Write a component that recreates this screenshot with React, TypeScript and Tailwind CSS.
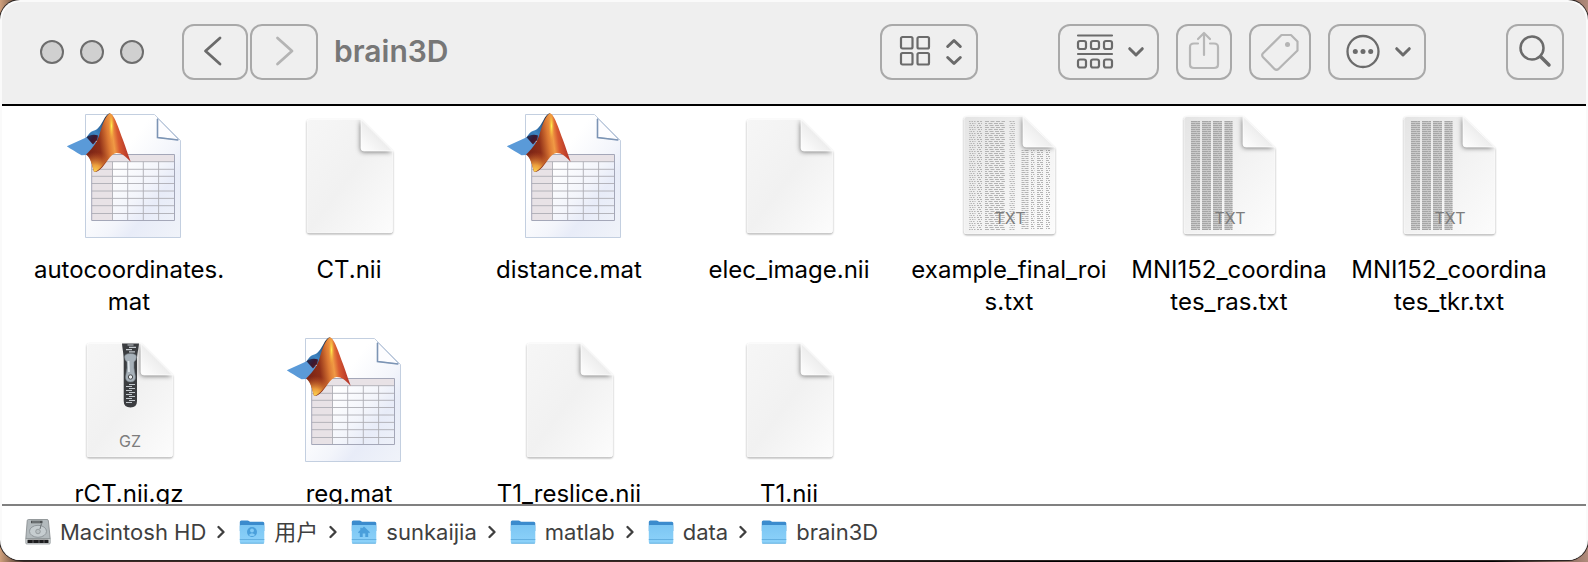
import React, { useId } from "react";

type FileKind = "mat" | "blank" | "txtWide" | "txtNarrow" | "gz";

const files: { label: string; kind: FileKind }[] = [
  { label: "autocoordinates.\nmat", kind: "mat" },
  { label: "CT.nii", kind: "blank" },
  { label: "distance.mat", kind: "mat" },
  { label: "elec_image.nii", kind: "blank" },
  { label: "example_final_roi\ns.txt", kind: "txtWide" },
  { label: "MNI152_coordina\ntes_ras.txt", kind: "txtNarrow" },
  { label: "MNI152_coordina\ntes_tkr.txt", kind: "txtNarrow" },
  { label: "rCT.nii.gz", kind: "gz" },
  { label: "reg.mat", kind: "mat" },
  { label: "T1_reslice.nii", kind: "blank" },
  { label: "T1.nii", kind: "blank" },
];

function MatIcon() {
  const id = useId();
  return (
    <svg viewBox="0 0 128 128" className="size-32" aria-hidden="true">
      <defs>
        <linearGradient id={id + "p"} x1="0" y1="0" x2="1" y2="1">
          <stop offset="0.35" stopColor="#ffffff" />
          <stop offset="0.6" stopColor="#f3f5fb" />
          <stop offset="0.72" stopColor="#e8ecf8" />
          <stop offset="1" stopColor="#f0f3f9" />
        </linearGradient>
        <linearGradient id={id + "o"} x1="22" y1="22" x2="66" y2="16" gradientUnits="userSpaceOnUse">
          <stop offset="0" stopColor="#7a2416" />
          <stop offset="0.25" stopColor="#8f2f18" />
          <stop offset="0.46" stopColor="#dd7a34" />
          <stop offset="0.57" stopColor="#f09a45" />
          <stop offset="0.68" stopColor="#d85a30" />
          <stop offset="0.85" stopColor="#b8382a" />
          <stop offset="1" stopColor="#8d1f1a" />
        </linearGradient>
        <radialGradient id={id + "y"} cx="30" cy="60" r="20" gradientUnits="userSpaceOnUse">
          <stop offset="0" stopColor="#ffd850" />
          <stop offset="0.35" stopColor="#f7ac42" stopOpacity="0.9" />
          <stop offset="1" stopColor="#d8622a" stopOpacity="0" />
        </radialGradient>
        <radialGradient id={id + "h"} cx="0" cy="0" r="1" gradientUnits="userSpaceOnUse" gradientTransform="translate(46.500 14) scale(3 17)">
          <stop offset="0" stopColor="#fff04f" />
          <stop offset="1" stopColor="#f0902c" stopOpacity="0" />
        </radialGradient>
        <linearGradient id={id + "b"} x1="22" y1="30" x2="42" y2="6" gradientUnits="userSpaceOnUse">
          <stop offset="0" stopColor="#2c629a" />
          <stop offset="0.4" stopColor="#3d84c2" />
          <stop offset="0.7" stopColor="#2e6397" />
          <stop offset="1" stopColor="#1d2c44" />
        </linearGradient>
        <linearGradient id={id + "m"} x1="22" y1="24" x2="32" y2="32" gradientUnits="userSpaceOnUse">
          <stop offset="0" stopColor="#1f3358" />
          <stop offset="0.5" stopColor="#3a1730" />
          <stop offset="1" stopColor="#5a1a22" />
        </linearGradient>
      </defs>
      <path d="M20.500 2.500H89.500L115.500 28.500V125.500H20.500Z" fill={"url(#" + id + "p)"} stroke="#c3cfe0" />
      <path d="M92.500 6V25.500L114 28Z" fill="#fdfdff" stroke="#b4c3d8" strokeWidth="1" />
      <path d="M92.500 7V25.500L113 28" fill="none" stroke="#7c94b4" strokeWidth="1.600" />
      <path d="M26.700 42.500H109.500V49.700H47.300V108.500H26.700Z" fill="#e8e2e6" />
      <path
        d="M26.700 49.700H109.500M26.700 57.300H109.500M26.700 64.300H109.500M26.700 71.500H109.500M26.700 79H109.500M26.700 86.400H109.500M26.700 93.700H109.500M26.700 101.500H109.500M47.500 49.700V108.500M62.700 49.700V108.500M78.300 49.700V108.500M93.600 49.700V108.500"
        stroke="#aeaeb4"
        strokeWidth="0.900"
      />
      <path d="M26.700 108.500V42.500H109.500V108.500Z" fill="none" stroke="#a4a7b8" />
      <path d="M1.800 34.200L21.700 25.200L33 31L21 43L16.500 43.300C11 40 6 37 1.800 34.200Z" fill="#5a9ad8" />
      <path d="M21.200 25.500C24 22.500 25 19.500 28.500 18.700C33 17.500 35 14 38 9C40 5.500 42 1.800 45 1.300L43 14L32 29Z" fill={"url(#" + id + "b)"} />
      <path d="M21.500 25.200C24 23 29 22 33 23.500L32 28L28 32.500Z" fill={"url(#" + id + "m)"} />
      <path
        d="M45 1.300C49 2 54 17 58 28C61 36 63 43 65.700 49.700C60 44 57 41 51.500 41C45 41.500 41 53 35 57.500C33 59.500 31 60 29 59.700C27 53 26 46 21 42.500C26 38 31 32 34 24C37 14 40 4 45 1.300Z"
        fill={"url(#" + id + "o)"}
      />
      <path d="M34 24C31 32 27 38 21 42.500C26 46 27 53 29 59.700C33 60 39 53 44 45L42 36Z" fill={"url(#" + id + "y)"} />
      <ellipse cx="46.500" cy="18" rx="3" ry="16" fill={"url(#" + id + "h)"} />
    </svg>
  );
}

function rowsOf(xs: [number, number, string][], skipFold: boolean) {
  return xs.map(([x1, x2, dash], i) => {
    const top = skipFold && x2 > 76 ? 38 : 9;
    const out: React.ReactNode[] = [];
    for (let y = top; y < 118; y += 2) {
      out.push(
        <path key={i + "-" + y} d={"M" + x1 + " " + (y + 0.5) + "H" + x2} strokeDasharray={dash} strokeDashoffset={(y * 7) % 3} />
      );
    }
    return out;
  });
}

function DocIcon({ kind }: { kind: FileKind }) {
  const id = useId();
  const txt = kind === "txtWide" || kind === "txtNarrow";
  const body = txt
    ? "M22 4.500H78L110 36V119Q110 122 107 122H22Q19 122 19 119V7.500Q19 4.500 22 4.500Z"
    : "M24.500 7.500H76L107.500 39V118.500Q107.500 121 105 121H24.500Q22 121 22 118.500V10Q22 7.500 24.500 7.500Z";
  const fold = txt ? "M78 4.500V32Q78 35 81 35H109.500Z" : "M76 7.500V36Q76 39 79 39H107.500Z";
  return (
    <svg viewBox="0 0 128 128" className="size-32" aria-hidden="true">
      <defs>
        <linearGradient id={id + "g"} x1="0" y1="0" x2="1" y2="1">
          <stop offset="0" stopColor={txt ? "#e4e4e4" : "#f6f6f6"} />
          <stop offset="0.5" stopColor={txt ? "#f2f2f2" : "#f1f1f1"} />
          <stop offset="1" stopColor="#fcfcfc" />
        </linearGradient>
        <linearGradient id={id + "f"} x1="0" y1="1" x2="0.550" y2="0.450">
          <stop offset="0" stopColor="#ffffff" />
          <stop offset="1" stopColor="#ebebeb" />
        </linearGradient>
        <filter id={id + "s"} x="-10%" y="-10%" width="120%" height="120%">
          <feDropShadow dx="0" dy="1" stdDeviation="0.900" floodColor="#000" floodOpacity="0.450" />
        </filter>
        <filter id={id + "t"} x="-40%" y="-40%" width="180%" height="180%">
          <feGaussianBlur stdDeviation="2.400" />
        </filter>
        <clipPath id={id + "c"}>
          <path d={body} />
        </clipPath>
      </defs>
      <path d={body} fill={"url(#" + id + "g)"} filter={"url(#" + id + "s)"} />
      <path d={body} fill="none" stroke="#ffffff" strokeOpacity="0.600" strokeWidth="1" />
      {kind === "txtWide" && (
        <g stroke="#b4b4b4" strokeWidth="1">
          {rowsOf(
            [
              [24, 30.500, "1.500 1"],
              [32, 37, "2 1"],
              [40, 60, "4 1.500"],
              [46, 56, "3 2"],
              [64.500, 70, "2 1"],
              [76.500, 83.500, "4 1"],
              [86, 89.500, "3 1"],
              [92, 98, "4 1"],
              [101, 105, "3 1"],
            ],
            true
          )}
        </g>
      )}
      {kind === "txtNarrow" && (
        <g>
          <path d="M26 9H35V117H26ZM37 9H46V117H37ZM48 9H57V117H48ZM59.500 9H67.500V117H59.500Z" fill="#cbcbcb" />
          <g stroke="#a6a6a6" strokeWidth="1">
            {rowsOf(
              [
                [26, 35, "6 0.500"],
                [37, 46, "6 0.500"],
                [48, 57, "6 0.500"],
                [59.500, 67.500, "6 0.500"],
              ],
              false
            )}
          </g>
        </g>
      )}
      <g clipPath={"url(#" + id + "c)"}>
        <path d={fold} transform="translate(-0.500 1)" fill="#000" fillOpacity="0.550" filter={"url(#" + id + "t)"} />
      </g>
      {kind === "gz" && (
        <g>
          <path d="M57 7.500H74C73.500 14 72 17 72 24V65Q72 71.500 65.500 71.500Q58.700 71.500 58.700 65V24C58.700 17 57.500 14 57 7.500Z" fill="#3b3d40" />
          <path d="M62.500 9H68.500M64 11.300H71M61 13.600H67M64 15.900H70M64 48.500H70M61 50.500H67M64 52.500H70M61 54.500H67M64 56.500H70M61 58.500H67M64 60.500H70M61 62.500H67M64 64.500H70M61 66.500H67" stroke="#c3c9ce" strokeWidth="1.200" />
          <path d="M59.500 21Q59.500 17.500 65.500 17.500Q71.500 17.500 71.500 21Q71.500 24 69 26V32L70.500 41Q70.500 46 65.500 46Q60.500 46 60.500 41L62 32V26Q59.500 24 59.500 21Z" fill="#a7b1b9" stroke="#70787f" strokeWidth="0.600" />
          <path d="M63.500 25L64 36" stroke="#dfe6eb" strokeWidth="1.800" />
          <circle cx="65.500" cy="41" r="2.200" fill="#e8ecee" stroke="#4a4d50" strokeWidth="1" />
        </g>
      )}
      <path d={fold} fill={"url(#" + id + "f)"} stroke="#ffffff" strokeWidth="0.800" />
      {(txt || kind === "gz") && (
        <text x="65" y={txt ? 112 : 111} textAnchor="middle" fontSize="16" fill="#7d7d7d" fontFamily="Inter, sans-serif">
          {txt ? "TXT" : "GZ"}
        </text>
      )}
    </svg>
  );
}

function FolderIcon({ glyph }: { glyph?: "user" | "home" }) {
  const id = useId();
  return (
    <svg viewBox="0 0 26 26" className="size-[26px] shrink-0" aria-hidden="true">
      <defs>
        <linearGradient id={id} x1="0" y1="0" x2="0" y2="1">
          <stop offset="0" stopColor="#7cc6f3" />
          <stop offset="1" stopColor="#8dd2fa" />
        </linearGradient>
      </defs>
      <path d="M0.800 3Q0.800 1.500 2.300 1.500H8.500Q9.500 1.500 10.300 2.200L11 2.700H23.800Q25.300 2.700 25.300 4.200V12H0.800Z" fill="#3b8bcd" />
      <path d="M0.800 7Q0.800 6 2 6H24Q25.300 6 25.300 7V23Q25.300 24.500 24 24.500H2Q0.800 24.500 0.800 23Z" fill={"url(#" + id + ")"} />
      <path d="M0.800 20.500H25.300M1.300 24.200H24.800" stroke="#5fadde" strokeWidth="0.900" />
      {glyph === "user" && (
        <g>
          <circle cx="13" cy="13" r="5" fill="#4a9fdb" />
          <circle cx="13" cy="11.500" r="1.900" fill="#83cbf6" />
          <path d="M9.800 15.900Q13 12.600 16.200 15.900Q13 18.300 9.800 15.900Z" fill="#83cbf6" />
        </g>
      )}
      {glyph === "home" && (
        <path d="M13 7.500L19 13.200L18 14.200L17.200 13.500V18H14.300V14.500H11.700V18H8.800V13.500L8 14.200L7 13.200L9.300 11V8.700H10.800V9.600Z" fill="#4a9fdb" />
      )}
    </svg>
  );
}

function DiskIcon() {
  return (
    <svg viewBox="0 0 26 26" className="size-[26px] shrink-0" aria-hidden="true">
      <path d="M3.500 0.500H22Q23.300 0.500 23.400 1.800L25.200 19.500H0.800L2.200 1.800Q2.300 0.500 3.500 0.500Z" fill="#b3babd" stroke="#84898c" strokeWidth="0.800" />
      <path d="M0.800 19.500H25.200V24Q25.200 25 24.200 25H1.800Q0.800 25 0.800 24Z" fill="#d3d6d7" stroke="#84898c" strokeWidth="0.700" />
      <path d="M2.500 20.800H23.500V24H2.500Z" fill="#1c1c1e" />
      <path d="M8 20.800V24M14 20.800V24M19 20.800V24" stroke="#777" strokeWidth="0.800" />
      <ellipse cx="13" cy="12.300" rx="8.500" ry="6" fill="#c6cdd0" stroke="#8b9296" strokeWidth="0.900" />
      <circle cx="13" cy="12.500" r="2.300" fill="#b8bfc2" stroke="#858b8e" strokeWidth="0.700" />
      <path d="M6 1.800H17.500V4.200H6Z" fill="#4c5052" />
      <path d="M7 3H15" stroke="#a5abae" strokeWidth="0.700" />
      <path d="M16.500 4.500L15 10" stroke="#6c7275" strokeWidth="1" />
    </svg>
  );
}

const crumbs: { name: string; icon: React.ReactNode }[] = [
  { name: "Macintosh HD", icon: <DiskIcon /> },
  { name: "用户", icon: <FolderIcon glyph="user" /> },
  { name: "sunkaijia", icon: <FolderIcon glyph="home" /> },
  { name: "matlab", icon: <FolderIcon /> },
  { name: "data", icon: <FolderIcon /> },
  { name: "brain3D", icon: <FolderIcon /> },
];

function ToolButton({ label, className, children }: { label: string; className: string; children: React.ReactNode }) {
  return (
    <button
      type="button"
      aria-label={label}
      className={"flex h-14 shrink-0 items-center justify-center rounded-xl border-2 border-[#a9a9a9] text-[#6b6b6b] " + className}
    >
      {children}
    </button>
  );
}

const line = { fill: "none", stroke: "currentColor", strokeLinecap: "round", strokeLinejoin: "round" } as const;

function DownChevron() {
  return (
    <svg viewBox="0 0 18 12" className="h-3 w-[18px]" {...line} strokeWidth="3">
      <path d="M2.700 2.700L9 9L15.300 2.700" />
    </svg>
  );
}

export default function App() {
  return (
    <div className="h-screen bg-[linear-gradient(90deg,#d0a07c_0,#3c2b26_24px,#3a2822_50%,#000000_66%,#000000_94%,#b28c7c_100%)] pb-0.5 font-[Inter,'Noto_Sans_CJK_SC',sans-serif]">
      <div className="flex h-full flex-col overflow-hidden rounded-[20px] border-2 border-b-0 border-[#fafafa] bg-white shadow-[0_0_0_1px_#2b2422]">
        <header className="flex h-[104px] shrink-0 items-center border-b-2 border-black bg-[#efefef] pr-[22px] pb-0.5 pl-[38px]">
          <div className="flex gap-4">
            {["Close", "Minimize", "Zoom"].map((n) => (
              <button key={n} type="button" aria-label={n} className="size-6 rounded-full border-2 border-[#6d6d6d] bg-[#d0d0d0]" />
            ))}
          </div>
          <nav aria-label="History" className="ml-[38px] flex gap-0.5">
            <ToolButton label="Back" className="w-[66px] pr-1 pb-0.5">
              <svg viewBox="0 0 20 32" className="h-8 w-5" {...line} strokeWidth="2.800">
                <path d="M17 3L2.500 16L17 29" />
              </svg>
            </ToolButton>
            <ToolButton label="Forward" className="w-[68px] pb-0.5">
              <svg viewBox="0 0 20 32" className="h-8 w-5 text-[#b4b4b4]" {...line} strokeWidth="2.800">
                <path d="M3.500 3L18 16L3.500 29" />
              </svg>
            </ToolButton>
          </nav>
          <h1 className="ml-4 flex-1 pb-0.5 text-[30px] leading-9 font-semibold text-[#777777]">brain3D</h1>
          <ToolButton label="View as icons" className="w-[98px] gap-[14px] pb-0.5 pl-1">
            <svg viewBox="0 0 32 32" className="size-8" {...line} strokeWidth="2.200">
              <rect x="2" y="2" width="11.500" height="11.500" rx="1.500" />
              <rect x="18.500" y="2" width="11.500" height="11.500" rx="1.500" />
              <rect x="2" y="18" width="11.500" height="11.500" rx="1.500" />
              <rect x="18.500" y="18" width="11.500" height="11.500" rx="1.500" />
            </svg>
            <svg viewBox="0 0 18 28" className="mt-0.5 h-7 w-[18px]" {...line} strokeWidth="3">
              <path d="M2.700 8.500L9 2.500L15.300 8.500M2.700 19.500L9 25.500L15.300 19.500" />
            </svg>
          </ToolButton>
          <div className="ml-20 flex gap-[17px]">
            <ToolButton label="Group" className="w-[101px] gap-[13px] pl-1">
              <svg viewBox="0 0 38 36" className="h-9 w-[38px]" {...line} strokeWidth="2.200">
                <path d="M2 1.500H36M2 20H36" />
                <rect x="2" y="7" width="8" height="8" rx="2" />
                <rect x="15" y="7" width="8" height="8" rx="2" />
                <rect x="28" y="7" width="8" height="8" rx="2" />
                <rect x="2" y="25.500" width="8" height="8" rx="2" />
                <rect x="15" y="25.500" width="8" height="8" rx="2" />
                <rect x="28" y="25.500" width="8" height="8" rx="2" />
              </svg>
              <DownChevron />
            </ToolButton>
            <ToolButton label="Share" className="w-14 pb-1">
              <svg viewBox="0 0 32 40" className="h-10 w-8 text-[#b7b7b7]" {...line} strokeWidth="2.200">
                <path d="M10 13.500H6Q2 13.500 2 17V34.500Q2 38 6 38H26Q30 38 30 34.500V17Q30 13.500 26 13.500H22M16 25V3M10 9L16 3L22 9" />
              </svg>
            </ToolButton>
            <ToolButton label="Tags" className="w-[62px]">
              <svg viewBox="0 0 40 40" className="size-10 text-[#b4b4b4]" {...line} strokeWidth="2.200">
                <path d="M21.500 3H31L37.500 9.500V18.500L18.500 37Q16.500 38.500 14.500 37L2.800 25Q1.500 23 2.800 21.500Z" />
                <circle cx="27.500" cy="12.500" r="2.500" fill="currentColor" stroke="none" />
              </svg>
            </ToolButton>
            <ToolButton label="More actions" className="w-[98px] gap-[13px] pl-0.5">
              <svg viewBox="0 0 36 36" className="size-9" {...line} strokeWidth="2.300">
                <circle cx="18" cy="17.500" r="15.500" />
                <g fill="currentColor" stroke="none">
                  <circle cx="10.300" cy="17.500" r="2.500" />
                  <circle cx="18" cy="17.500" r="2.500" />
                  <circle cx="25.700" cy="17.500" r="2.500" />
                </g>
              </svg>
              <DownChevron />
            </ToolButton>
          </div>
          <ToolButton label="Search" className="ml-20 w-[58px] pb-0.5">
            <svg viewBox="0 0 34 34" className="size-[34px]" {...line} strokeWidth="2.500">
              <circle cx="14" cy="14" r="11.500" />
              <path d="M22.500 22.500L31 31" strokeWidth="3.500" />
            </svg>
          </ToolButton>
        </header>

        <main className="min-h-0 flex-1 overflow-hidden pt-1.5 pl-[17px]">
          <ul className="grid grid-cols-[repeat(auto-fill,220px)] gap-y-[18px]">
            {files.map((f) => (
              <li key={f.label} className="flex h-[206px] flex-col items-center gap-3.5">
                {f.kind === "mat" ? <MatIcon /> : <DocIcon kind={f.kind} />}
                <span className="text-center text-[24px] leading-8 whitespace-pre text-black">{f.label}</span>
              </li>
            ))}
          </ul>
        </main>

        <footer className="h-14 shrink-0 border-t-2 border-[#808080] bg-white pl-[23px]">
          <ol className="flex h-[52px] items-center">
            {crumbs.map((c, i) => (
              <li key={c.name} className="flex items-center">
                {c.icon}
                <a href="#" className="ml-[9px] text-[22px] leading-8 text-[#3f3f3f]">
                  {c.name}
                </a>
                {i < crumbs.length - 1 && (
                  <svg viewBox="0 0 8 14" className="mr-3.5 ml-[11px] h-3.5 w-2 text-[#3f3f3f]" {...line} strokeWidth="2.300" aria-hidden="true">
                    <path d="M1.500 2L6.500 7L1.500 12" />
                  </svg>
                )}
              </li>
            ))}
          </ol>
        </footer>
      </div>
    </div>
  );
}
